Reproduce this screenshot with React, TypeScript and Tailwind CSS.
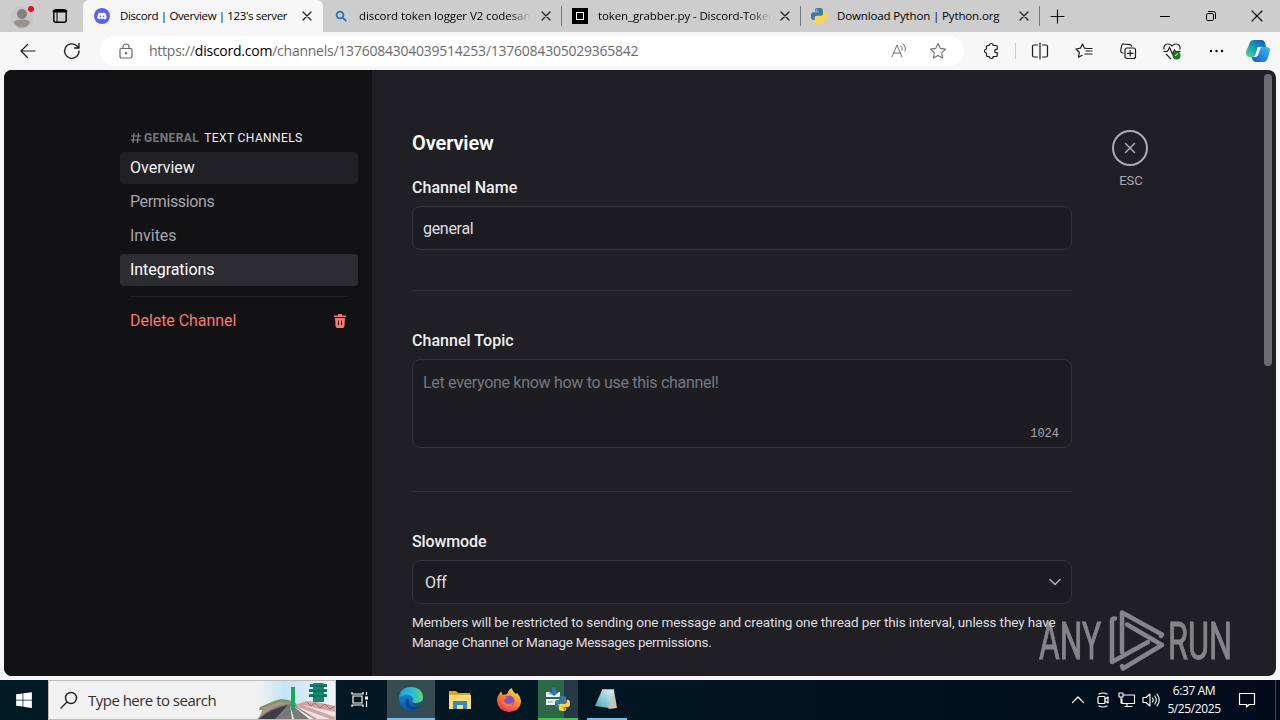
import type { ReactNode } from "react";
import { FaDiscord, FaWindows } from "react-icons/fa";

interface TabProps {
    icon: ReactNode;
    title: string;
    titleClass: string;
    className: string;
}

interface StrokeProps {
    className?: string;
    children: ReactNode;
    width?: number;
    size?: number;
}

function Stroke({ className = "", children, width = 1.2, size = 20 }: StrokeProps) {
    return (
        <svg
            width={size}
            height={size}
            viewBox={`0 0 ${size} ${size}`}
            fill="none"
            stroke="currentColor"
            strokeWidth={width}
            strokeLinecap="round"
            strokeLinejoin="round"
            className={`shrink-0 ${className}`}
        >
            {children}
        </svg>
    );
}

function PythonLogo({ size }: { size: number }) {
    const d =
        "M14.25.18l.9.2.73.26.59.3.45.32.34.34.25.34.16.33.1.3.04.26.02.2-.01.13V8.5l-.05.63-.13.55-.21.46-.26.38-.3.31-.33.25-.35.19-.35.14-.33.1-.3.07-.26.04-.21.02H8.77l-.69.05-.59.14-.5.22-.41.27-.33.32-.27.35-.2.36-.15.37-.1.35-.07.32-.04.27-.02.21v3.06H3.17l-.21-.03-.28-.07-.32-.12-.35-.18-.36-.26-.36-.36-.35-.46-.32-.59-.28-.73-.21-.88-.14-1.05-.05-1.23.06-1.22.16-1.04.24-.87.32-.71.36-.57.4-.44.42-.33.42-.24.4-.16.36-.1.32-.05.24-.01h.16l.06.01h8.16v-.83H6.18l-.01-2.75-.02-.37.05-.34.11-.31.17-.28.25-.26.31-.23.38-.2.44-.18.51-.15.58-.12.64-.1.71-.06.77-.04.84-.02 1.27.05zm-6.3 1.98l-.23.33-.08.41.08.41.23.34.33.22.41.09.41-.09.33-.22.23-.34.08-.41-.08-.41-.23-.33-.33-.22-.41-.09-.41.09z";
    return (
        <svg width={size} height={size} viewBox="0 0 24 24" className="shrink-0">
            <path d={d} fill="#3c78aa" />
            <path d={d} fill="#fdd835" transform="rotate(180 12 12)" />
        </svg>
    );
}

function CloseIcon({ className = "" }: { className?: string }) {
    return (
        <Stroke size={10} width={1.3} className={className}>
            <path d="M1 1l8 8M9 1L1 9" />
        </Stroke>
    );
}

function Tab({ icon, title, titleClass, className }: TabProps) {
    return (
        <div className={`flex h-8 shrink-0 items-center ${className}`}>
            <div className="flex w-4 shrink-0 justify-center">{icon}</div>
            <span
                className={`ml-2.5 h-5 w-[172px] shrink-0 overflow-hidden text-[11.5px] leading-5 whitespace-nowrap text-black ${titleClass}`}
            >
                {title}
            </span>
            <CloseIcon className="ml-2.5 text-[#222]" />
        </div>
    );
}

function TabBar() {
    return (
        <div className="flex h-8 w-full bg-[#cdcdcd]">
            <div className="flex w-[83px] shrink-0 items-center rounded-br-md">
                <svg width="26" height="30" viewBox="0 0 26 30" className="ml-2.5">
                    <circle cx="12" cy="17" r="11" fill="#c7c5c5" />
                    <circle cx="12" cy="13" r="5" fill="#858180" />
                    <path d="M4 22q0-3.500 8-3.500t8 3.500q-3 4.500-8 4.500T4 22z" fill="#99918d" />
                    <circle cx="21" cy="8" r="3" fill="#e80b1c" />
                </svg>
                <Stroke className="ml-4 text-black" size={16} width={1.4}>
                    <rect x="1.800" y="1.800" width="12.400" height="12.400" rx="2" />
                    <path d="M2 3.200h12" strokeWidth="2.600" />
                    <path d="M5 3v11" strokeWidth="1" />
                </Stroke>
            </div>
            <Tab
                className="w-60 rounded-t-md bg-[#f7f7f7] pl-[11px]"
                titleClass="tracking-[-0.38px]"
                title="Discord | Overview | 123's server"
                icon={
                    <div className="flex size-4 shrink-0 items-center justify-center rounded-full bg-[#5865f2]">
                        <FaDiscord className="size-2.5 text-white" />
                    </div>
                }
            />
            <Tab
                className="w-[238px] pl-[10px]"
                titleClass="tracking-[-0.08px] [mask-image:linear-gradient(to_right,black_150px,transparent_172px)]"
                title="discord token logger V2 codesandbox"
                icon={
                    <Stroke size={12} width={1.8} className="text-[#2476b8]">
                        <circle cx="5" cy="5" r="3.400" />
                        <path d="M7.700 7.700l3 3" />
                    </Stroke>
                }
            />
            <div className="mt-1.5 h-5 w-px bg-[#777]" />
            <Tab
                className="w-[238px] pl-[10px]"
                titleClass="tracking-[-0.12px] [mask-image:linear-gradient(to_right,black_150px,transparent_174px)]"
                title="token_grabber.py - Discord-Token-Grabber"
                icon={
                    <div className="flex size-4 items-center justify-center bg-black">
                        <div className="size-2 border border-white" />
                    </div>
                }
            />
            <div className="mt-1.5 h-5 w-px bg-[#777]" />
            <Tab
                className="w-[238px] pl-[10px]"
                titleClass="tracking-[-0.14px]"
                title="Download Python | Python.org"
                icon={<PythonLogo size={16} />}
            />
            <div className="mt-1.5 h-5 w-px bg-[#777]" />
            <div className="flex items-center pl-2.5 text-[#111]">
                <Stroke size={15} width={1.200}>
                    <path d="M7.500 1v13M1 7.500h13" />
                </Stroke>
            </div>
            <div className="ml-auto flex items-center text-black">
                <Stroke size={10} width={1}>
                    <path d="M0 5.500h10" />
                </Stroke>
                <Stroke size={12} width={1} className="ml-[35px]">
                    <rect x="1.500" y="3.500" width="7" height="7" rx="1.300" />
                    <path d="M3.500 1.500h5q2 0 2 2v5" />
                </Stroke>
                <Stroke size={12} width={1.100} className="mr-[17px] ml-[34px]">
                    <path d="M1 1l10 10M11 1L1 11" />
                </Stroke>
            </div>
        </div>
    );
}

function Toolbar() {
    return (
        <div className="flex h-[38px] w-full items-center bg-[#f7f7f7] text-[#1c1c1c]">
            <Stroke size={18} className="ml-[19px]">
                <path d="M16 9H2M8.500 2.500L2 9l6.500 6.500" />
            </Stroke>
            <Stroke size={18} width={1.300} className="ml-[26px]">
                <path d="M16 9a7.200 7.200 0 1 1-2.300-5.200L16 6M16 1.500V6h-4.500" />
            </Stroke>
            <div className="ml-[19px] flex h-[30px] w-[864px] shrink-0 items-center rounded-full bg-white">
                <Stroke size={16} className="ml-[18px] text-[#666]" width={1.200}>
                    <rect x="2" y="5.500" width="12" height="9.500" rx="1.500" />
                    <path d="M5 5.500V4a3 3 0 0 1 6 0v1.500" />
                    <circle cx="8" cy="10.200" r=".6" fill="currentColor" />
                </Stroke>
                <span className="ml-[15px] w-[700px] text-sm tracking-[-0.24px] whitespace-nowrap text-[#6b6b6b]">
                    https://<span className="text-black">discord.com</span>/channels/1376084304039514253/1376084305029365842
                </span>
                <svg width="18" height="18" viewBox="0 0 18 18" fill="none" stroke="#707070" className="ml-[41px] shrink-0">
                    <path d="M2 15L7 3l5 12M3.700 11h6.600M11 4q2 1.500 1 4M13 2q3.500 2.500 2 7" strokeLinecap="round" />
                </svg>
                <Stroke size={18} className="ml-[21px] text-[#707070]" width={1.100}>
                    <path d="M9 1.500l2.300 4.900 5.200.7-3.800 3.700.9 5.300L9 13.600l-4.600 2.500.9-5.300L1.500 7.100l5.200-.7z" />
                </Stroke>
            </div>
            <Stroke size={18} className="ml-[18px]" width={1.200}>
                <path d="M5.500 3.500h1.700a2 2 0 0 1 4 0h3a1 1 0 0 1 1 1v2.800h-.8a1.700 1.700 0 0 0 0 3.400h.8v2.800a1 1 0 0 1-1 1h-3a2 2 0 0 1-4 0H5.500a1 1 0 0 1-1-1V11a2 2 0 0 1 0-4V4.500a1 1 0 0 1 1-1z" />
            </Stroke>
            <div className="ml-[15px] h-4 w-px bg-[#ccc]" />
            <Stroke size={18} className="ml-[15px]" width={1.200}>
                <path d="M9 1v16M6.500 3H3a1.500 1.500 0 0 0-1.500 1.500v9A1.500 1.500 0 0 0 3 15h3.500M11.500 3H15a1.500 1.500 0 0 1 1.500 1.500v9A1.500 1.500 0 0 1 15 15h-3.500" />
            </Stroke>
            <Stroke size={18} className="ml-[26px]" width={1.200}>
                <path d="M12 6.500l-2.500-.3L7.500 2 5.400 6.200 1 7l3.300 3.200-.8 5 3.700-1.900M11 9h6M12 6.500h5M10 12h7" />
            </Stroke>
            <Stroke size={20} className="ml-[25px]" width={1.200}>
                <path d="M5 12l-1-.3a2 2 0 0 1-1.300-2.200l1-5A2 2 0 0 1 6 2.900l6 .8a2 2 0 0 1 1.600 1.500" />
                <rect x="7" y="7" width="10.500" height="10.500" rx="2" />
                <path d="M12.200 9.500v5.600M9.400 12.300H15" />
            </Stroke>
            <svg width="20" height="20" viewBox="0 0 20 20" fill="none" className="ml-[24px] shrink-0">
                <path
                    d="M2 8.500Q1.500 3 6 3q2.500 0 4 2 1.500-2 4-2 4.500 0 4 5.500M1.500 10.500h4l2-4 3 6.500 2-4 1 1.500h5M4 13l5 5"
                    stroke="#222"
                    strokeWidth="1.200"
                />
                <circle cx="14.500" cy="14.500" r="4" fill="#167b18" />
                <path d="M13 15l3-2.500" stroke="white" />
            </svg>
            <svg width="16" height="4" viewBox="0 0 16 4" className="ml-[27px] shrink-0">
                <circle cx="2" cy="2" r="1.200" />
                <circle cx="7.500" cy="2" r="1.200" />
                <circle cx="13" cy="2" r="1.200" />
            </svg>
            <svg width="26" height="26" viewBox="0 0 26 26" className="ml-[20px] shrink-0">
                <defs>
                    <linearGradient id="cp1" x1="0" y1="1" x2=".8" y2="0">
                        <stop offset="0" stopColor="#5dd68a" />
                        <stop offset=".5" stopColor="#16a5b5" />
                        <stop offset="1" stopColor="#115cc0" />
                    </linearGradient>
                    <linearGradient id="cp2" x1="0" y1="1" x2="1" y2="0">
                        <stop offset="0" stopColor="#1753cf" />
                        <stop offset="1" stopColor="#36c2f3" />
                    </linearGradient>
                </defs>
                <path
                    d="M9 2h8q2 0 3 3l1 4h-5q-2 0-3 3l-2 5q-1 2-3 2H5q-4 0-4-4 0-2 2-6l2-5q1-2 4-2z"
                    fill="url(#cp1)"
                />
                <path
                    d="M18 9h3q4 0 4 3 0 2-2 7l-1 3q-1 2-4 2h-7q-3 0-4-4v-1h2q2 0 3-3l2-5q1-2 4-2z"
                    fill="url(#cp2)"
                />
                <path d="M12.800 9h4q-1.300.5-2 3l-1.500 4.500q-1 2.500-3.300 2.500H8.500q1.300-.5 2-2.500l1.500-5z" fill="white" />
            </svg>
        </div>
    );
}

function NavItem({ label, className }: { label: string; className: string }) {
    return <div className={`flex h-8 items-center rounded px-2.5 text-base ${className}`}>{label}</div>;
}

function Sidebar() {
    return (
        <div className="flex w-[368px] shrink-0 flex-col bg-[#121214] pt-[60px] pr-3.5 pl-[116px]">
            <div className="flex h-[22px] items-start pl-2.5 text-xs leading-4">
                <Stroke size={12} width={1.200} className="mt-0.5 text-[#88888e]">
                    <path d="M4 1.500L3 10.500M8.500 1.500l-1 9M1.500 4h9.500M1 8h9.500" />
                </Stroke>
                <span className="ml-0.5 font-bold tracking-[0.4px] text-[#77777d]">GENERAL</span>
                <span className="ml-[5px] tracking-[0.4px] text-[#f3f3f4]">TEXT CHANNELS</span>
            </div>
            <div className="flex flex-col gap-0.5">
                <NavItem label="Overview" className="bg-[#212125] text-[#f2f2f3]" />
                <NavItem label="Permissions" className="tracking-[-0.38px] text-[#a5a5ab]" />
                <NavItem label="Invites" className="tracking-[-0.05px] text-[#a5a5ab]" />
                <NavItem label="Integrations" className="bg-[#2c2c31] tracking-[-0.05px] text-white" />
            </div>
            <div className="mx-2.5 mt-2.5 h-px bg-[#26262a]" />
            <div className="mt-2 flex h-8 items-center justify-between px-2.5 text-base tracking-[-0.05px] text-[#f57976]">
                Delete Channel
                <svg width="16" height="16" viewBox="0 0 16 16" fill="#f57976">
                    <path d="M2 2.500h4V1h4v1.500h4V4H2zM3 5h10l-.6 8.600q-.1 1.400-1.500 1.400H5.100q-1.400 0-1.500-1.400zM6 7.500v4.500h1V7.500zM9 7.500v4.500h1V7.500z" fillRule="evenodd" />
                </svg>
            </div>
        </div>
    );
}

function Label({ children, className = "tracking-[0.04px]" }: { children: ReactNode; className?: string }) {
    return <div className={`h-6 text-base leading-6 font-medium text-[#efeff0] ${className}`}>{children}</div>;
}

function Settings() {
    return (
        <div className="w-[660px] shrink-0">
            <h2 className="h-6 pt-px text-xl leading-6 font-semibold tracking-[-0.1px] text-white">Overview</h2>
            <div className="mt-[22px]">
                <Label>Channel Name</Label>
                <div className="mt-[6px] flex h-11 items-center rounded-lg border border-[#343439] bg-[#1d1d21] px-2.5 pt-0.5 text-base tracking-[-0.3px] text-[#dfdfe2]">
                    general
                </div>
            </div>
            <div className="mt-10 mb-[38px] h-px bg-[#303035]" />
            <div>
                <Label>Channel Topic</Label>
                <div className="mt-[6px] flex h-[89px] flex-col justify-between rounded-lg border border-[#343439] bg-[#1d1d21] px-2.5 pt-[11px] pb-1">
                    <span className="text-base leading-6 tracking-[-0.3px] text-[#77777e]">
                        Let everyone know how to use this channel!
                    </span>
                    <span className="self-end pr-0.5 font-['Liberation_Mono'] text-xs leading-[18px] text-[#a5a5aa]">
                        1024
                    </span>
                </div>
            </div>
            <div className="mt-[43px] mb-[38px] h-px bg-[#303035]" />
            <div>
                <Label className="tracking-[-0.12px]">Slowmode</Label>
                <div className="mt-[6px] flex h-11 items-center justify-between rounded-lg border border-[#343439] bg-[#1d1d21] pr-2.5 pl-3 text-base text-[#dfdfe2]">
                    <span className="pt-0.5 tracking-[-0.1px]">Off</span>
                    <Stroke size={12} width={1.600} className="text-[#aaaab0]">
                        <path d="M1 3.500l5 5 5-5" />
                    </Stroke>
                </div>
                <p className="mt-2 text-[13.5px] leading-5 whitespace-nowrap text-[#dedee0]">
                    <span className="block tracking-[-0.11px]">
                        Members will be restricted to sending one message and creating one thread per this interval, unless they have
                    </span>
                    <span className="block tracking-[-0.33px]">Manage Channel or Manage Messages permissions.</span>
                </p>
            </div>
        </div>
    );
}

function Watermark() {
    return (
        <svg
            width="200"
            height="66"
            viewBox="0 0 200 66"
            className="absolute top-[608px] left-[1036px] opacity-60"
            fill="#c9c9cc"
            stroke="#c9c9cc"
        >
            <text x="3" y="51" fontSize="52" strokeWidth="1" textLength="62" lengthAdjust="spacingAndGlyphs">
                ANY
            </text>
            <text x="132" y="51" fontSize="52" strokeWidth="1" textLength="64" lengthAdjust="spacingAndGlyphs">
                RUN
            </text>
            <g fill="none" strokeWidth="4.500" strokeLinejoin="round" strokeLinecap="round">
                <path d="M86 44V4.500L126 26.500 125 28" />
                <path d="M91 16.500L126 37 87 60.500 86 58" />
                <path d="M79 10.500Q76 10 76 12.500V54L112 34" />
            </g>
        </svg>
    );
}

function SearchArt() {
    return (
        <svg width="78" height="38" viewBox="0 0 78 38" className="ml-auto shrink-0">
            <defs>
                <linearGradient id="sky" x1="0" x2="1">
                    <stop offset="0" stopColor="#f2f2f2" />
                    <stop offset=".35" stopColor="#c5e4f7" />
                    <stop offset="1" stopColor="#eff4f8" />
                </linearGradient>
            </defs>
            <rect width="78" height="38" fill="url(#sky)" />
            <path d="M3 26l14-6 7-2 8 1 8 4-12 6H2z" fill="#7a9a60" />
            <path d="M2 37l4-10 16-6 10 1-9 16z" fill="#b3948d" />
            <path d="M0 38q18-15 33-15l16 2 13 13z" fill="#7b7879" />
            <path d="M2 38q11-10 29-14L18 38z" fill="#3c3e43" />
            <path d="M33 24l4 14h-2zM35 24l22 14h-5z" fill="#efede0" />
            <path d="M38 24l11-4 10 1 19 4v13H58z" fill="#d5a1a1" />
            <path d="M38 25l35 13H61zM45 24l33 7v5z" fill="#eee6e4" />
            <path d="M50 21l4 4 4-3 5 5 5-4 5 5 5-3" stroke="#a66875" fill="none" />
            <path d="M34 6h4v23h-4z" fill="#18a65f" />
            <path d="M53 3h3l1-1h9l1 1h3v3h-3v2h3v3h-3v2h3v3h-3v5H56v-5h-4v-3h4v-2h-4V8h4V6h-3z" fill="#16866f" />
            <path d="M53 5h17M52 10h18M52 15h18" stroke="#075c52" />
        </svg>
    );
}

function EdgeIcon() {
    return (
        <svg width="26" height="26" viewBox="0 0 26 26">
            <defs>
                <linearGradient id="edgeTop" x1="0" y1=".4" x2="1" y2=".4">
                    <stop offset="0" stopColor="#219edb" />
                    <stop offset=".6" stopColor="#27bfd5" />
                    <stop offset="1" stopColor="#66da58" />
                </linearGradient>
                <linearGradient id="edgeBlue" x1="0" y1="0" x2="0" y2="1">
                    <stop offset="0" stopColor="#199ae0" />
                    <stop offset="1" stopColor="#0954a8" />
                </linearGradient>
            </defs>
            <circle cx="13" cy="13" r="12" fill="url(#edgeBlue)" />
            <path d="M9 12q-4 7 3 12 8 1 12-5-5 3-10 1-4-2-3-6z" fill="#103f8c" />
            <path d="M1 12Q2 1 13 1q11 0 12 10 0 6-7 6-4 0-4-2 2-1 1-3-1-3-5-3-6 0-9 3z" fill="url(#edgeTop)" />
            <path d="M14 15q0 2 4 2 4 0 6-2l1 4-2 1q-4 1-7-1-3-2-2-4z" fill="#364c52" />
        </svg>
    );
}

function Taskbar() {
    return (
        <div className="flex h-10 w-full items-center bg-linear-to-r from-[#001b24] via-[#011621] to-[#020b1c] text-white">
            <div className="flex w-12 shrink-0 justify-center">
                <FaWindows className="size-[18px]" />
            </div>
            <div className="flex h-10 w-72 shrink-0 items-center border border-[#bcbcbc] bg-[#f2f2f2]">
                <Stroke size={18} width={1.400} className="ml-[11px] text-[#222]">
                    <circle cx="11" cy="7" r="5.500" />
                    <path d="M7 11l-6 6" />
                </Stroke>
                <span className="ml-2.5 text-[15px] tracking-[-0.52px] whitespace-nowrap text-[#303030]">
                    Type here to search
                </span>
                <SearchArt />
            </div>
            <div className="mr-[3px] flex w-12 shrink-0 justify-center">
                <svg width="18" height="18" viewBox="0 0 18 18" fill="none" stroke="white" strokeWidth="1.200">
                    <path d="M1 1v2h11V1M1 16v-2h11v2M2 5h9v7H2zM15.500 1v3M15.500 10v6" />
                    <path d="M14 5.500h3v3h-3z" fill="white" stroke="none" />
                </svg>
            </div>
            <div className="flex h-full w-12 shrink-0 items-center justify-center border-b-2 border-[#76b9ed] bg-[#344b52]">
                <EdgeIcon />
            </div>
            <div className="flex w-[49px] shrink-0 justify-center">
                <svg width="22" height="20" viewBox="0 0 22 20">
                    <path d="M0 1h7l2 2h12v5H0z" fill="#e6a51a" />
                    <path d="M0 5h22v14H0z" fill="#ffdb75" />
                    <path d="M4 11h14v8h-4v-4H8v4H4z" fill="#3388c8" />
                </svg>
            </div>
            <div className="flex w-[49px] shrink-0 justify-center">
                <svg width="26" height="26" viewBox="0 0 26 26">
                    <defs>
                        <linearGradient id="fox" x1=".8" y1="0" x2=".2" y2="1">
                            <stop offset="0" stopColor="#ffe34b" />
                            <stop offset=".45" stopColor="#ff8a24" />
                            <stop offset="1" stopColor="#f52465" />
                        </linearGradient>
                    </defs>
                    <path
                        d="M5 4l2 4 4-1q1-4 5-6 0 3 4 6l1-1q4 4 4 9-1 9-12 10Q2 24 1 14q0-5 3-8z"
                        fill="url(#fox)"
                    />
                    <circle cx="13" cy="14" r="5.500" fill="#8051d4" />
                    <path d="M5 9q4 0 7 2-4 0-4 3 1 3 5 3 2 0 4-2 0 5-5 5-6-1-7-8z" fill="#ff7828" />
                </svg>
            </div>
            <div className="ml-[5px] flex h-full w-10 shrink-0 items-center justify-center border-b-2 border-[#38ce35] bg-linear-to-r from-[#2c6848] from-65% to-[#253849] to-65%">
                <div className="relative h-6 w-6">
                    <svg width="17" height="20" viewBox="0 0 17 20">
                        <path d="M0 5h14v5H0zM0 12h13v6H0z" fill="#f1f5f7" />
                        <path d="M2 7h4M2 15h5" stroke="#8ba1ad" />
                        <path d="M6 0h4v5h3L8 9 3 5h3z" fill="#2e75b6" />
                    </svg>
                    <div className="absolute top-[9px] left-[9px]">
                        <PythonLogo size={15} />
                    </div>
                </div>
            </div>
            <div className="ml-[9px] flex h-full w-10 shrink-0 items-center justify-center border-b-2 border-[#76b9ed]">
                <svg width="24" height="22" viewBox="0 0 24 22">
                    <defs>
                        <linearGradient id="note" x1="0" y1="1" x2="1" y2="0">
                            <stop offset="0" stopColor="#48a4b3" />
                            <stop offset="1" stopColor="#dff4f4" />
                        </linearGradient>
                    </defs>
                    <path d="M19 2l3 18-8 1-3-4z" fill="#c7c5b7" />
                    <path d="M7 2h12l-5 18-14-2z" fill="url(#note)" />
                    <path d="M7 2h12" stroke="#d5dddd" strokeWidth="1.500" />
                </svg>
            </div>
            <div className="ml-auto flex h-full items-center">
                <Stroke size={14} width={1.300}>
                    <path d="M1.500 9.500L7 4l5.500 5.500" />
                </Stroke>
                <Stroke size={16} width={1.200} className="ml-2.5">
                    <rect x="3" y="4.500" width="7" height="7" rx="1" />
                    <path d="M10 7l3-2v6l-3-2M4 2q4-2 8 0M4 14q4 2 8 0" />
                </Stroke>
                <Stroke size={18} width={1.100} className="ml-[7px]">
                    <path d="M6 4h10.500v8.500H4V8M7 15.500h7M9 12.500v3M1 2h4v4H1zM3 6v6" />
                </Stroke>
                <Stroke size={18} width={1.100} className="ml-[6px]">
                    <path d="M1 6.500h3l4-3.500v12l-4-3.500H1zM10.500 7q1.500 2 0 4M12.800 5q3 4 0 8M15 3q4.500 6 0 12" />
                </Stroke>
                <div className="ml-[7px] flex w-[54px] flex-col items-center text-xs leading-[18px] tracking-[-0.4px] whitespace-nowrap">
                    <span>6:37 AM</span>
                    <span>5/25/2025</span>
                </div>
                <Stroke size={18} width={1.200} className="ml-[17px]">
                    <path d="M1.500 2.500h15v11H11L8.500 16v-2.500h-7z" />
                </Stroke>
                <div className="ml-[19px] h-full w-[5px] border-l border-[#3d4656]" />
            </div>
        </div>
    );
}

export default function App() {
    return (
        <div className="relative flex h-[720px] w-[1280px] flex-col overflow-hidden bg-[#f7f7f7] font-['Open_Sans',sans-serif]">
            <TabBar />
            <Toolbar />
            <div className="mx-1 mb-1 flex h-[606px] overflow-hidden rounded-lg bg-[#202024] font-['Roboto',sans-serif]">
                <Sidebar />
                <div className="flex grow pt-[60px] pl-10">
                    <Settings />
                    <div className="ml-10 flex w-9 flex-col items-center">
                        <div className="flex size-9 items-center justify-center rounded-full border-2 border-[#aaaab0] text-[#aaaab0]">
                            <Stroke size={12} width={1.500}>
                                <path d="M1.500 1.500l9 9M10.500 1.500l-9 9" />
                            </Stroke>
                        </div>
                        <span className="mt-[6px] ml-0.5 text-[13px] leading-[18px] text-[#aaaab0]">ESC</span>
                    </div>
                </div>
                <div className="w-3 shrink-0 pt-1">
                    <div className="h-[292px] w-2 rounded-full bg-[#6d6a76]" />
                </div>
            </div>
            <Taskbar />
            <div className="font-['Roboto',sans-serif]">
                <Watermark />
            </div>
        </div>
    );
}
